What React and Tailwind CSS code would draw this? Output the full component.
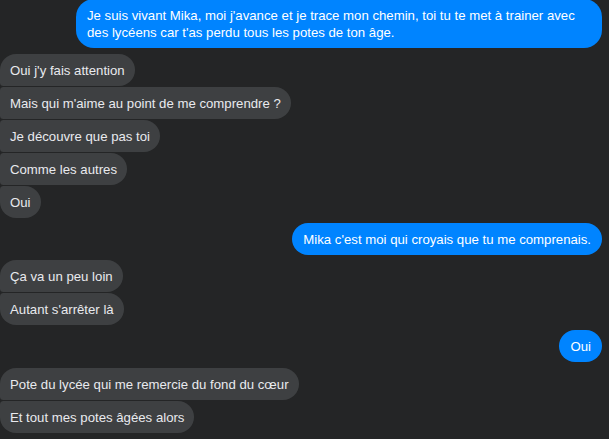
import React from "react";

const groups = [
  { side: "me", mt: "-mt-px", items: ["Je suis vivant Mika, moi j'avance et je trace mon chemin, toi tu te met à trainer avec des lycéens car t'as perdu tous les potes de ton âge."] },
  {
    side: "them",
    mt: "mt-[6px]",
    items: [
      "Oui j'y fais attention",
      "Mais qui m'aime au point de me comprendre ?",
      "Je découvre que pas toi",
      "Comme les autres",
      "Oui",
    ],
  },
  { side: "me", mt: "mt-[5px]", items: ["Mika c'est moi qui croyais que tu me comprenais."] },
  { side: "them", mt: "mt-[5px]", items: ["Ça va un peu loin", "Autant s'arrêter là"] },
  { side: "me", mt: "mt-[5px]", items: ["Oui"] },
  {
    side: "them",
    mt: "mt-[6px]",
    items: ["Pote du lycée qui me remercie du fond du cœur", "Et tout mes potes âgées alors"],
  },
];

// received bubbles get a tighter corner on the side where they stack
function themCorners(i, n) {
  if (n === 1) return "rounded-[18px]";
  if (i === 0) return "rounded-[18px] rounded-bl-[4px]";
  if (i === n - 1) return "rounded-[18px] rounded-tl-[4px]";
  return "rounded-r-[18px] rounded-l-[4px]";
}

function Bubble({ side, text, corners }) {
  if (side === "me") {
    return (
      <div className="max-w-[526px] rounded-[18px] bg-[#0084ff] px-[11px] py-[7.5px] text-white">
        {text}
      </div>
    );
  }
  return (
    <div className={`${corners} bg-[#3e4042] px-[10px] py-[7.5px] text-[#e9eaee]`}>{text}</div>
  );
}

export default function App() {
  return (
    <div
      className="flex h-screen w-full flex-col overflow-hidden bg-[#242526] pr-[7px] text-[13.2px] leading-[17px]"
      style={{ fontFamily: '"Liberation Sans", Arial, sans-serif' }}
    >
      {groups.map((g, gi) => (
        <div
          key={gi}
          className={`flex flex-col gap-px ${g.mt} ${g.side === "me" ? "items-end" : "items-start"}`}
        >
          {g.items.map((t, i) => (
            <Bubble key={i} side={g.side} text={t} corners={themCorners(i, g.items.length)} />
          ))}
        </div>
      ))}
    </div>
  );
}
